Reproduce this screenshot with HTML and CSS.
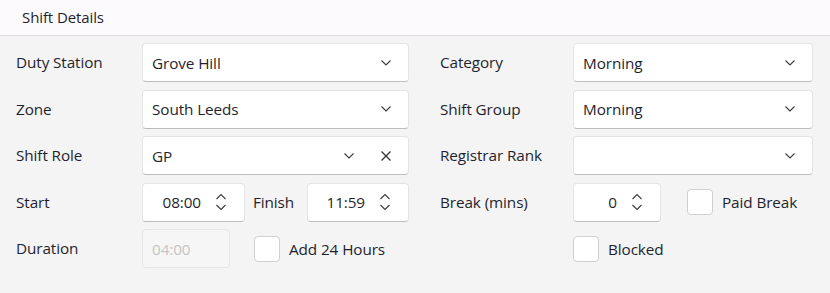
FILE: index.html
```html
<!DOCTYPE html>
<html lang="en">
<head>
    <meta charset="UTF-8">
    <meta name="viewport" content="width=device-width, initial-scale=1.0">
    <title>Shift Details</title>
    <link rel="stylesheet" href="styles.css">
</head>
<body>
    <div class="header">Shift Details</div>
    <div class="form">
        <!-- row 1 -->
        <label class="label">Duty Station</label>
        <div class="combo">
            <span class="value">Grove Hill</span>
            <svg class="chev" width="12" height="8" viewBox="0 0 12 8"><path d="M1.5 1.5 L6 6 L10.5 1.5"/></svg>
        </div>
        <label class="label right">Category</label>
        <div class="combo">
            <span class="value">Morning</span>
            <svg class="chev" width="12" height="8" viewBox="0 0 12 8"><path d="M1.5 1.5 L6 6 L10.5 1.5"/></svg>
        </div>

        <!-- row 2 -->
        <label class="label">Zone</label>
        <div class="combo">
            <span class="value">South Leeds</span>
            <svg class="chev" width="12" height="8" viewBox="0 0 12 8"><path d="M1.5 1.5 L6 6 L10.5 1.5"/></svg>
        </div>
        <label class="label right">Shift Group</label>
        <div class="combo">
            <span class="value">Morning</span>
            <svg class="chev" width="12" height="8" viewBox="0 0 12 8"><path d="M1.5 1.5 L6 6 L10.5 1.5"/></svg>
        </div>

        <!-- row 3 -->
        <label class="label">Shift Role</label>
        <div class="combo">
            <span class="value">GP</span>
            <svg class="chev" width="12" height="8" viewBox="0 0 12 8"><path d="M1.5 1.5 L6 6 L10.5 1.5"/></svg>
            <svg class="clear" width="12" height="12" viewBox="0 0 12 12"><path d="M1.5 1.5 L10.5 10.5 M10.5 1.5 L1.5 10.5"/></svg>
        </div>
        <label class="label right">Registrar Rank</label>
        <div class="combo">
            <span class="value"></span>
            <svg class="chev" width="12" height="8" viewBox="0 0 12 8"><path d="M1.5 1.5 L6 6 L10.5 1.5"/></svg>
        </div>

        <!-- row 4 -->
        <label class="label">Start</label>
        <div class="inline">
            <div class="spin spin-wide">
                <span class="num">08:00</span>
                <svg class="arrows" width="12" height="20" viewBox="0 0 12 20"><path d="M1.5 7 L6 2.5 L10.5 7 M1.5 13 L6 17.5 L10.5 13"/></svg>
            </div>
            <span class="label">Finish</span>
            <div class="spin spin-finish">
                <span class="num">11:59</span>
                <svg class="arrows" width="12" height="20" viewBox="0 0 12 20"><path d="M1.5 7 L6 2.5 L10.5 7 M1.5 13 L6 17.5 L10.5 13"/></svg>
            </div>
        </div>
        <label class="label right">Break (mins)</label>
        <div class="inline">
            <div class="spin spin-small">
                <span class="num">0</span>
                <svg class="arrows" width="12" height="20" viewBox="0 0 12 20"><path d="M1.5 7 L6 2.5 L10.5 7 M1.5 13 L6 17.5 L10.5 13"/></svg>
            </div>
            <label class="check check-paid"><span class="box"></span>Paid Break</label>
        </div>

        <!-- row 5 -->
        <label class="label">Duration</label>
        <div class="inline">
            <div class="disabled">04:00</div>
            <label class="check check-add"><span class="box"></span>Add 24 Hours</label>
        </div>
        <span></span>
        <div class="inline">
            <label class="check"><span class="box"></span>Blocked</label>
        </div>
    </div>
</body>
</html>
```

FILE: styles.css
```css
body {
    font-family: "Open Sans", "Noto Sans", sans-serif;
    font-size: 15.3px;
    letter-spacing: -0.1px;
    color: #1f1f2e;
    background-color: #f4f4f4;
    margin: 0;
    padding: 0;
    height: 293px;
}
.header {
    height: 35px;
    line-height: 34px;
    padding-left: 22px;
    font-size: 15px;
    background-color: #fdfafd;
    border-bottom: 1px solid #dedede;
}
.form {
    display: grid;
    grid-template-columns: 126px 267px 164px 240px;
    grid-auto-rows: 39px;
    row-gap: 7.5px;
    padding: 7px 0 0 16px;
}
.label {
    display: flex;
    align-items: center;
    white-space: nowrap;
    padding-bottom: 1px;
}
.label.right {
    padding-left: 31px;
}
.combo, .spin, .disabled {
    box-sizing: border-box;
    height: 39px;
    display: flex;
    align-items: center;
    background-color: #fff;
    border: 1px solid #e4e4e4;
    border-bottom-color: #bdbdbd;
    border-radius: 4px;
}
.combo {
    padding: 0 16px 0 9px;
}
.combo .value {
    flex: 1;
}
.chev, .clear, .arrows {
    fill: none;
    stroke: #3a3a3a;
    stroke-width: 1.1;
}
.clear {
    margin-left: 25px;
    stroke-width: 1.4;
}
.inline {
    display: flex;
    align-items: center;
}
.inline > .label {
    margin-left: 8px;
    height: 39px;
}
.spin {
    justify-content: flex-end;
    padding-right: 17px;
}
.spin .num {
    margin-right: 14px;
}
.spin-wide {
    width: 103px;
}
.spin-finish {
    width: 102px;
    margin-left: auto;
}
.spin-small {
    width: 88px;
}
.disabled {
    width: 88px;
    padding-left: 9px;
    color: #c4c4c4;
    background-color: #f6f6f6;
    border-color: #e6e6e6;
}
.check {
    display: flex;
    align-items: center;
    white-space: nowrap;
}
.check-add {
    margin-left: 24px;
}
.check-paid {
    margin-left: 26px;
}
.box {
    box-sizing: border-box;
    width: 26px;
    height: 26px;
    margin-right: 9px;
    background-color: #fff;
    border: 1px solid #d0d0d0;
    border-radius: 4px;
}
```
